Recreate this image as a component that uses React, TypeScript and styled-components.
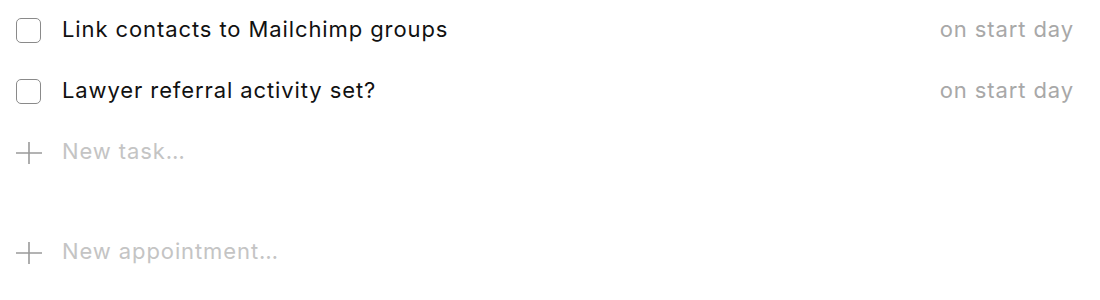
import styled, { createGlobalStyle } from 'styled-components';

const GlobalStyle = createGlobalStyle`
  body {
    margin: 0;
    background: #ffffff;
    font-family: Inter, "Noto Sans", "Liberation Sans", sans-serif;
  }
`;

const tasks = [
  { title: 'Link contacts to Mailchimp groups', due: 'on start day' },
  { title: 'Lawyer referral activity set?', due: 'on start day' },
];

function PlusIcon() {
  return (
    <svg width="26" height="22" viewBox="0 0 26 22">
      <path d="M0 11h26M13 0v22" stroke="#9a9a9a" strokeWidth="1.6" fill="none" />
    </svg>
  );
}

export default function App() {
  return (
    <>
      <GlobalStyle />
      <Page>
        <Section>
          {tasks.map((t) => (
            <Row key={t.title}>
              <Checkbox />
              <Title>{t.title}</Title>
              <Due>{t.due}</Due>
            </Row>
          ))}
          <Row>
            <PlusIcon />
            <Placeholder>New task…</Placeholder>
          </Row>
        </Section>
        <Section>
          <Row>
            <PlusIcon />
            <Placeholder>New appointment…</Placeholder>
          </Row>
        </Section>
      </Page>
    </>
  );
}

const Page = styled.div`
  display: flex;
  flex-direction: column;
  gap: 39px;
  padding: 0 26px 0 16px;
`;

const Section = styled.div`
  display: flex;
  flex-direction: column;
`;

const Row = styled.div`
  display: flex;
  align-items: center;
  height: 61px;
  gap: 20px;
  font-size: 22px;
  letter-spacing: 0.9px;
`;

const Checkbox = styled.span`
  box-sizing: border-box;
  width: 25px;
  height: 25px;
  border: 1.5px solid #8a8a8a;
  border-radius: 5px;
  flex-shrink: 0;
`;

const Label = styled.span`
  margin-bottom: 3px;
`;

const Title = styled(Label)`
  flex: 1;
  color: #111;
  margin-left: 1px;
`;

const Due = styled(Label)`
  color: #a8a8a8;
`;

const Placeholder = styled(Label)`
  color: #c4c4c4;
`;
